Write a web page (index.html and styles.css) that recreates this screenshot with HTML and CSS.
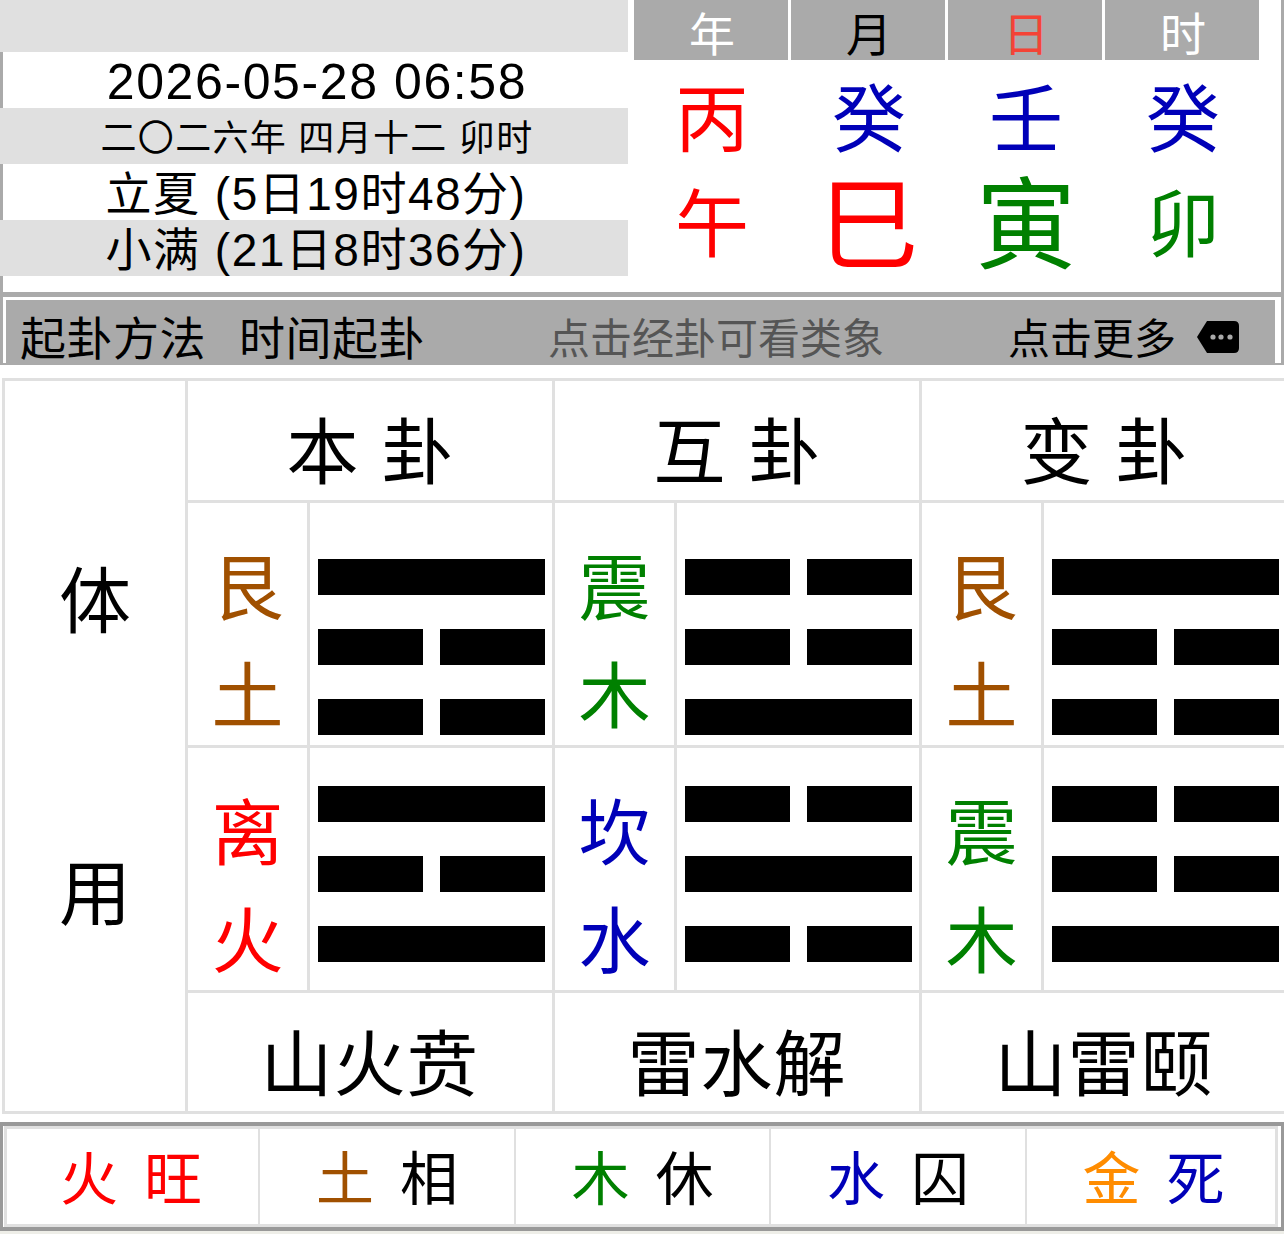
FILE: index.html
```html
<!DOCTYPE html>
<html lang="zh-CN">
<head>
<meta charset="utf-8"/>
<title>梅花易数</title>
<link rel="stylesheet" href="styles.css">
</head>
<body>
<div class="top">
  <div class="info">
    <div class="dates">
      <div class="row grey"></div>
      <div class="row solar">2026-05-28 06:58</div>
      <div class="row grey lunar">二〇二六年 四月十二 卯时</div>
      <div class="row">立夏 (5日19时48分)</div>
      <div class="row grey">小满 (21日8时36分)</div>
    </div>
    <div class="bazi">
      <div class="head">
        <span class="white">年</span>
        <span>月</span>
        <span class="day">日</span>
        <span class="white">时</span>
      </div>
      <div class="gz stems">
        <span class="red">丙</span>
        <span class="blue">癸</span>
        <span class="blue">壬</span>
        <span class="blue">癸</span>
      </div>
      <div class="gz branches">
        <span class="red">午</span>
        <span class="red big">巳</span>
        <span class="green big">寅</span>
        <span class="green">卯</span>
      </div>
    </div>
  </div>
  <div class="method">
    <span class="m-name">起卦方法</span>
    <span class="m-val">时间起卦</span>
    <span class="hint">点击经卦可看类象</span>
    <span class="more">点击更多</span>
    <svg class="more-icon" width="42" height="32" viewBox="0 0 42 32">
      <path d="M10 0H37Q42 0 42 5V27Q42 32 37 32H10L0 16Z" fill="#000"/>
      <circle cx="16" cy="16" r="2.6" fill="#aaa"/>
      <circle cx="24" cy="16" r="2.6" fill="#aaa"/>
      <circle cx="33" cy="16" r="2.6" fill="#aaa"/>
    </svg>
  </div>
</div>

<div class="gua">
  <div class="side">
    <div>体</div>
    <div>用</div>
  </div>

  <div class="title">本 卦</div>
  <div class="title">互 卦</div>
  <div class="title">变 卦</div>

  <div class="names brown"><span>艮</span><span>土</span></div>
  <div class="bars upper"><i></i><i class="yin"><b></b><b></b></i><i class="yin"><b></b><b></b></i></div>
  <div class="names green"><span>震</span><span>木</span></div>
  <div class="bars upper"><i class="yin"><b></b><b></b></i><i class="yin"><b></b><b></b></i><i></i></div>
  <div class="names brown"><span>艮</span><span>土</span></div>
  <div class="bars upper"><i></i><i class="yin"><b></b><b></b></i><i class="yin"><b></b><b></b></i></div>

  <div class="names red"><span>离</span><span>火</span></div>
  <div class="bars lower"><i></i><i class="yin"><b></b><b></b></i><i></i></div>
  <div class="names blue"><span>坎</span><span>水</span></div>
  <div class="bars lower"><i class="yin"><b></b><b></b></i><i></i><i class="yin"><b></b><b></b></i></div>
  <div class="names green"><span>震</span><span>木</span></div>
  <div class="bars lower"><i class="yin"><b></b><b></b></i><i class="yin"><b></b><b></b></i><i></i></div>

  <div class="title bottom">山火贲</div>
  <div class="title bottom">雷水解</div>
  <div class="title bottom">山雷颐</div>
</div>

<div class="seasons">
  <div class="inner">
    <div class="cell first"><span class="red">火</span><span class="red">旺</span></div>
    <div class="cell"><span class="brown">土</span><span>相</span></div>
    <div class="cell"><span class="green">木</span><span>休</span></div>
    <div class="cell"><span class="blue">水</span><span>囚</span></div>
    <div class="cell last"><span class="orange">金</span><span class="blue">死</span></div>
  </div>
</div>
<div class="strip"></div>
</body>
</html>
```

FILE: styles.css
```css
*{box-sizing:border-box;}
html,body{margin:0;padding:0;background:#fff;overflow:hidden;}
body{width:1284px;height:1234px;color:#000;font-family:"Liberation Sans","Noto Sans CJK SC",sans-serif;}

.red{color:#f00;}
.blue{color:#0000b8;}
.green{color:#008000;}
.brown{color:#a05000;}
.orange{color:#ff8c00;}
.white{color:#fff;}

/* top block */
.top{height:365px;border-left:3px solid #aaa;border-right:3px solid #aaa;border-bottom:2px solid #aaa;}
.info{display:flex;height:297px;border-bottom:5px solid #aaa;}
.dates{width:628px;margin-left:-3px;flex:none;}
.row{height:56px;line-height:60px;padding-left:4px;font-size:46px;text-align:center;white-space:nowrap;letter-spacing:1.5px;}
.row:first-child{height:52px;}
.grey{background:#e0e0e0;}
.solar{padding-left:6px;font-size:50px;letter-spacing:1.6px;}
.lunar{padding-left:6px;font-size:36px;letter-spacing:1.3px;line-height:62px;}

.bazi{margin-left:6px;width:625px;}
.head{display:grid;grid-template-columns:repeat(4,154px);column-gap:3px;}
.head span{height:60px;line-height:70px;padding-left:2px;background:#aaa;text-align:center;font-size:46px;}
.head .day{color:#f44336;}
.gz{display:grid;grid-template-columns:repeat(4,154px);column-gap:3px;padding-left:1px;text-align:center;font-size:74px;}
.stems{height:105px;line-height:122px;}
.branches{height:120px;line-height:122px;}
.big{font-size:100px;}

.method{display:flex;align-items:center;height:63px;margin:3px 6px 0 3px;padding:7px 0 0 14px;background:#aaa;font-size:46px;white-space:nowrap;}
.m-name,.m-val{letter-spacing:.5px;}
.m-val{margin-left:33px;}
.hint{margin-left:123px;font-size:42px;color:#555;}
.more{margin-left:124px;font-size:42px;}
.more-icon{margin:4px 0 0 21px;}

/* gua table */
.gua{display:grid;grid-template-columns:180px repeat(3,119px 242px);grid-template-rows:119px 242px 242px 118px;gap:3px;width:1300px;margin:13px 0 0 2px;border:3px solid #e0e0e0;background:#e0e0e0;}
.gua > div{background:#fff;}
.side{grid-row:1 / 5;display:flex;flex-direction:column;justify-content:center;gap:192px;padding-top:3px;text-align:center;font-size:72px;line-height:100px;}
.title{grid-column:span 2;text-align:center;font-size:72px;line-height:144px;word-spacing:3px;}
.title.bottom{line-height:144px;letter-spacing:1px;}
.names{display:flex;flex-direction:column;align-items:center;padding-top:32px;font-size:72px;line-height:108px;}
.bars{display:flex;flex-direction:column;gap:34px;padding:0 8px;}
.bars.upper{padding-top:56px;}
.bars.lower{padding-top:38px;}
.bars i{display:flex;justify-content:space-between;height:36px;width:227px;background:#000;}
.bars .yin{background:#fff;}
.bars b{width:105px;background:#000;}

/* wang xiang xiu qiu si */
.seasons{height:109px;margin-top:8px;border:4px solid #999;border-left-width:3px;border-right-width:3px;padding:0 3px 0 1px;}
.inner{display:grid;grid-template-columns:251px 254px 253px 254px 1fr;gap:2px;height:100%;border:3px solid #e0e0e0;background:#e0e0e0;}
.cell{display:flex;justify-content:center;gap:26px;padding-top:9px;background:#fff;font-size:58px;line-height:84px;}
.cell.first{padding-right:3px;}
.cell.last{padding-left:5px;}
.strip{height:3px;background:#eeeee8;}
```
